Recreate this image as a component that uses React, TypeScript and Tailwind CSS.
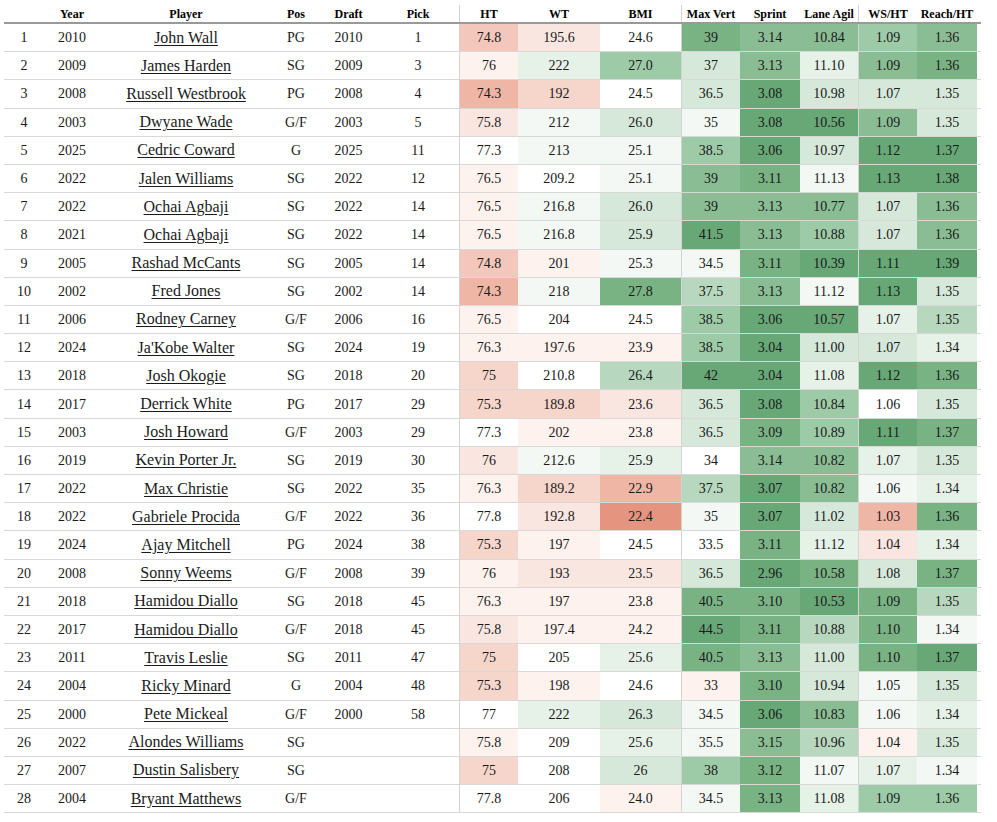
import React from "react";

type Row = {
  year: string;
  name: string;
  pos: string;
  draft: string;
  pick: string;
  vals: string[];
  lv: number[];
};

const SHADE: Record<number, string> = {
  [-6]: "bg-[#e4947f]",
  [-5]: "bg-[#efb6a6]",
  [-4]: "bg-[#f3c7bb]",
  [-3]: "bg-[#f6d5cb]",
  [-2]: "bg-[#fae6e0]",
  [-1]: "bg-[#fdf2ee]",
  0: "bg-white",
  1: "bg-[#f3f8f4]",
  2: "bg-[#e6f1e8]",
  3: "bg-[#d5e8d9]",
  4: "bg-[#b8d7bf]",
  5: "bg-[#9ecba7]",
  6: "bg-[#8abd94]",
  7: "bg-[#79b384]",
  8: "bg-[#68a877]",
};

const r = (
  year: string,
  name: string,
  pos: string,
  draft: string,
  pick: string,
  v: string,
  l: string
): Row => ({
  year,
  name,
  pos,
  draft,
  pick,
  vals: v.split(" "),
  lv: l.split(" ").map(Number),
});

const ROWS: Row[] = [
  r("2010", "John Wall", "PG", "2010", "1", "74.8 195.6 24.6 39 3.14 10.84 1.09 1.36", "-4 -2 0 7 6 6 5 6"),
  r("2009", "James Harden", "SG", "2009", "3", "76 222 27.0 37 3.13 11.10 1.09 1.36", "-1 2 5 3 6 2 6 7"),
  r("2008", "Russell Westbrook", "PG", "2008", "4", "74.3 192 24.5 36.5 3.08 10.98 1.07 1.35", "-5 -3 0 3 8 3 3 3"),
  r("2003", "Dwyane Wade", "G/F", "2003", "5", "75.8 212 26.0 35 3.08 10.56 1.09 1.35", "-2 1 3 1 8 8 6 3"),
  r("2025", "Cedric Coward", "G", "2025", "11", "77.3 213 25.1 38.5 3.06 10.97 1.12 1.37", "0 1 1 5 8 3 8 8"),
  r("2022", "Jalen Williams", "SG", "2022", "12", "76.5 209.2 25.1 39 3.11 11.13 1.13 1.38", "-1 0 1 6 7 1 8 8"),
  r("2022", "Ochai Agbaji", "SG", "2022", "14", "76.5 216.8 26.0 39 3.13 10.77 1.07 1.36", "-1 1 3 6 6 6 3 6"),
  r("2021", "Ochai Agbaji", "SG", "2022", "14", "76.5 216.8 25.9 41.5 3.13 10.88 1.07 1.36", "-1 1 3 8 6 5 3 6"),
  r("2005", "Rashad McCants", "SG", "2005", "14", "74.8 201 25.3 34.5 3.11 10.39 1.11 1.39", "-4 -1 1 1 7 8 8 8"),
  r("2002", "Fred Jones", "SG", "2002", "14", "74.3 218 27.8 37.5 3.13 11.12 1.13 1.35", "-5 1 7 4 6 1 8 3"),
  r("2006", "Rodney Carney", "G/F", "2006", "16", "76.5 204 24.5 38.5 3.06 10.57 1.07 1.35", "-1 0 0 5 8 8 2 4"),
  r("2024", "Ja'Kobe Walter", "SG", "2024", "19", "76.3 197.6 23.9 38.5 3.04 11.00 1.07 1.34", "-1 -1 -1 5 8 3 3 2"),
  r("2018", "Josh Okogie", "SG", "2018", "20", "75 210.8 26.4 42 3.04 11.08 1.12 1.36", "-3 0 4 8 8 2 8 7"),
  r("2017", "Derrick White", "PG", "2017", "29", "75.3 189.8 23.6 36.5 3.08 10.84 1.06 1.35", "-3 -3 -2 3 8 5 0 3"),
  r("2003", "Josh Howard", "G/F", "2003", "29", "77.3 202 23.8 36.5 3.09 10.89 1.11 1.37", "0 -1 -1 3 7 5 8 7"),
  r("2019", "Kevin Porter Jr.", "SG", "2019", "30", "76 212.6 25.9 34 3.14 10.82 1.07 1.35", "-2 1 2 0 6 6 2 3"),
  r("2022", "Max Christie", "SG", "2022", "35", "76.3 189.2 22.9 37.5 3.07 10.82 1.06 1.34", "-1 -3 -5 4 8 6 1 2"),
  r("2022", "Gabriele Procida", "G/F", "2022", "36", "77.8 192.8 22.4 35 3.07 11.02 1.03 1.36", "0 -2 -6 1 8 3 -5 7"),
  r("2024", "Ajay Mitchell", "PG", "2024", "38", "75.3 197 24.5 33.5 3.11 11.12 1.04 1.34", "-3 -1 0 0 7 2 -2 2"),
  r("2008", "Sonny Weems", "G/F", "2008", "39", "76 193 23.5 36.5 2.96 10.58 1.08 1.37", "-1 -2 -2 3 8 7 3 7"),
  r("2018", "Hamidou Diallo", "SG", "2018", "45", "76.3 197 23.8 40.5 3.10 10.53 1.09 1.35", "-1 -1 -1 7 7 8 7 4"),
  r("2017", "Hamidou Diallo", "G/F", "2018", "45", "75.8 197.4 24.2 44.5 3.11 10.88 1.10 1.34", "-2 -1 -1 8 7 4 7 1"),
  r("2011", "Travis Leslie", "SG", "2011", "47", "75 205 25.6 40.5 3.13 11.00 1.10 1.37", "-3 0 2 7 6 3 7 8"),
  r("2004", "Ricky Minard", "G", "2004", "48", "75.3 198 24.6 33 3.10 10.94 1.05 1.35", "-3 -1 0 -1 7 3 1 3"),
  r("2000", "Pete Mickeal", "G/F", "2000", "58", "77 222 26.3 34.5 3.06 10.83 1.06 1.34", "0 2 3 1 8 6 1 2"),
  r("2022", "Alondes Williams", "SG", "", "", "75.8 209 25.6 35.5 3.15 10.96 1.04 1.35", "-1 0 2 1 6 4 -1 3"),
  r("2007", "Dustin Salisbery", "SG", "", "", "75 208 26 38 3.12 11.07 1.07 1.34", "-3 0 3 5 7 1 2 1"),
  r("2004", "Bryant Matthews", "G/F", "", "", "77.8 206 24.0 34.5 3.13 11.08 1.09 1.36", "0 0 -1 1 7 2 5 5"),
];

// widths of the eight stat cells, with a divider before HT, Max Vert and WS/HT
const STAT_W = ["w-[59px]", "w-[82px]", "w-[81px]", "w-[59px]", "w-[60px]", "w-[58px]", "w-[59px]", "w-[60px]"];
const DIVIDER = [true, false, false, true, false, false, true, false];
const STAT_HEAD = ["HT", "WT", "BMI", "Max Vert", "Sprint", "Lane Agil", "WS/HT", "Reach/HT"];

function LeadCells({ row, i }: { row: Row; i: number }) {
  return (
    <>
      <div className="w-[40px] text-center">{i + 1}</div>
      <div className="w-[56px] text-center">{row.year}</div>
      <div className="w-[172px] text-center">
        <span className="underline underline-offset-2 text-[16px]">{row.name}</span>
      </div>
      <div className="w-[48px] text-center">{row.pos}</div>
      <div className="w-[57px] text-center">{row.draft}</div>
      <div className="w-[82px] text-center">{row.pick}</div>
    </>
  );
}

export default function App() {
  return (
    <div className="min-h-screen bg-white [font-family:Liberation_Serif,serif] text-[#1a1a1a]">
      <div className="pt-[5px] pl-[4px] w-[981px]">
        <div className="flex h-[19px] border-b-2 border-[#999999] text-[12px] font-bold text-black leading-[18px]">
          <div className="w-[40px]" />
          <div className="w-[56px] text-center">Year</div>
          <div className="w-[172px] text-center">Player</div>
          <div className="w-[48px] text-center">Pos</div>
          <div className="w-[57px] text-center">Draft</div>
          <div className="w-[82px] text-center">Pick</div>
          {STAT_HEAD.map((h, k) => (
            <div
              key={h}
              className={`${STAT_W[k]} text-center whitespace-nowrap ${DIVIDER[k] ? "border-l border-[#d3d3d3]" : ""}`}
            >
              {h}
            </div>
          ))}
        </div>
        {ROWS.map((row, i) => (
          <div key={i} className="flex h-[28.2px] border-b border-[#d8d8d8] text-[14px] items-stretch">
            <div className="flex items-center">
              <LeadCells row={row} i={i} />
            </div>
            {row.vals.map((v, k) => (
              <div
                key={k}
                className={`${STAT_W[k]} ${SHADE[row.lv[k]]} flex items-center justify-center ${DIVIDER[k] ? "border-l border-[#d3d3d3]" : ""}`}
              >
                {v}
              </div>
            ))}
          </div>
        ))}
      </div>
    </div>
  );
}
